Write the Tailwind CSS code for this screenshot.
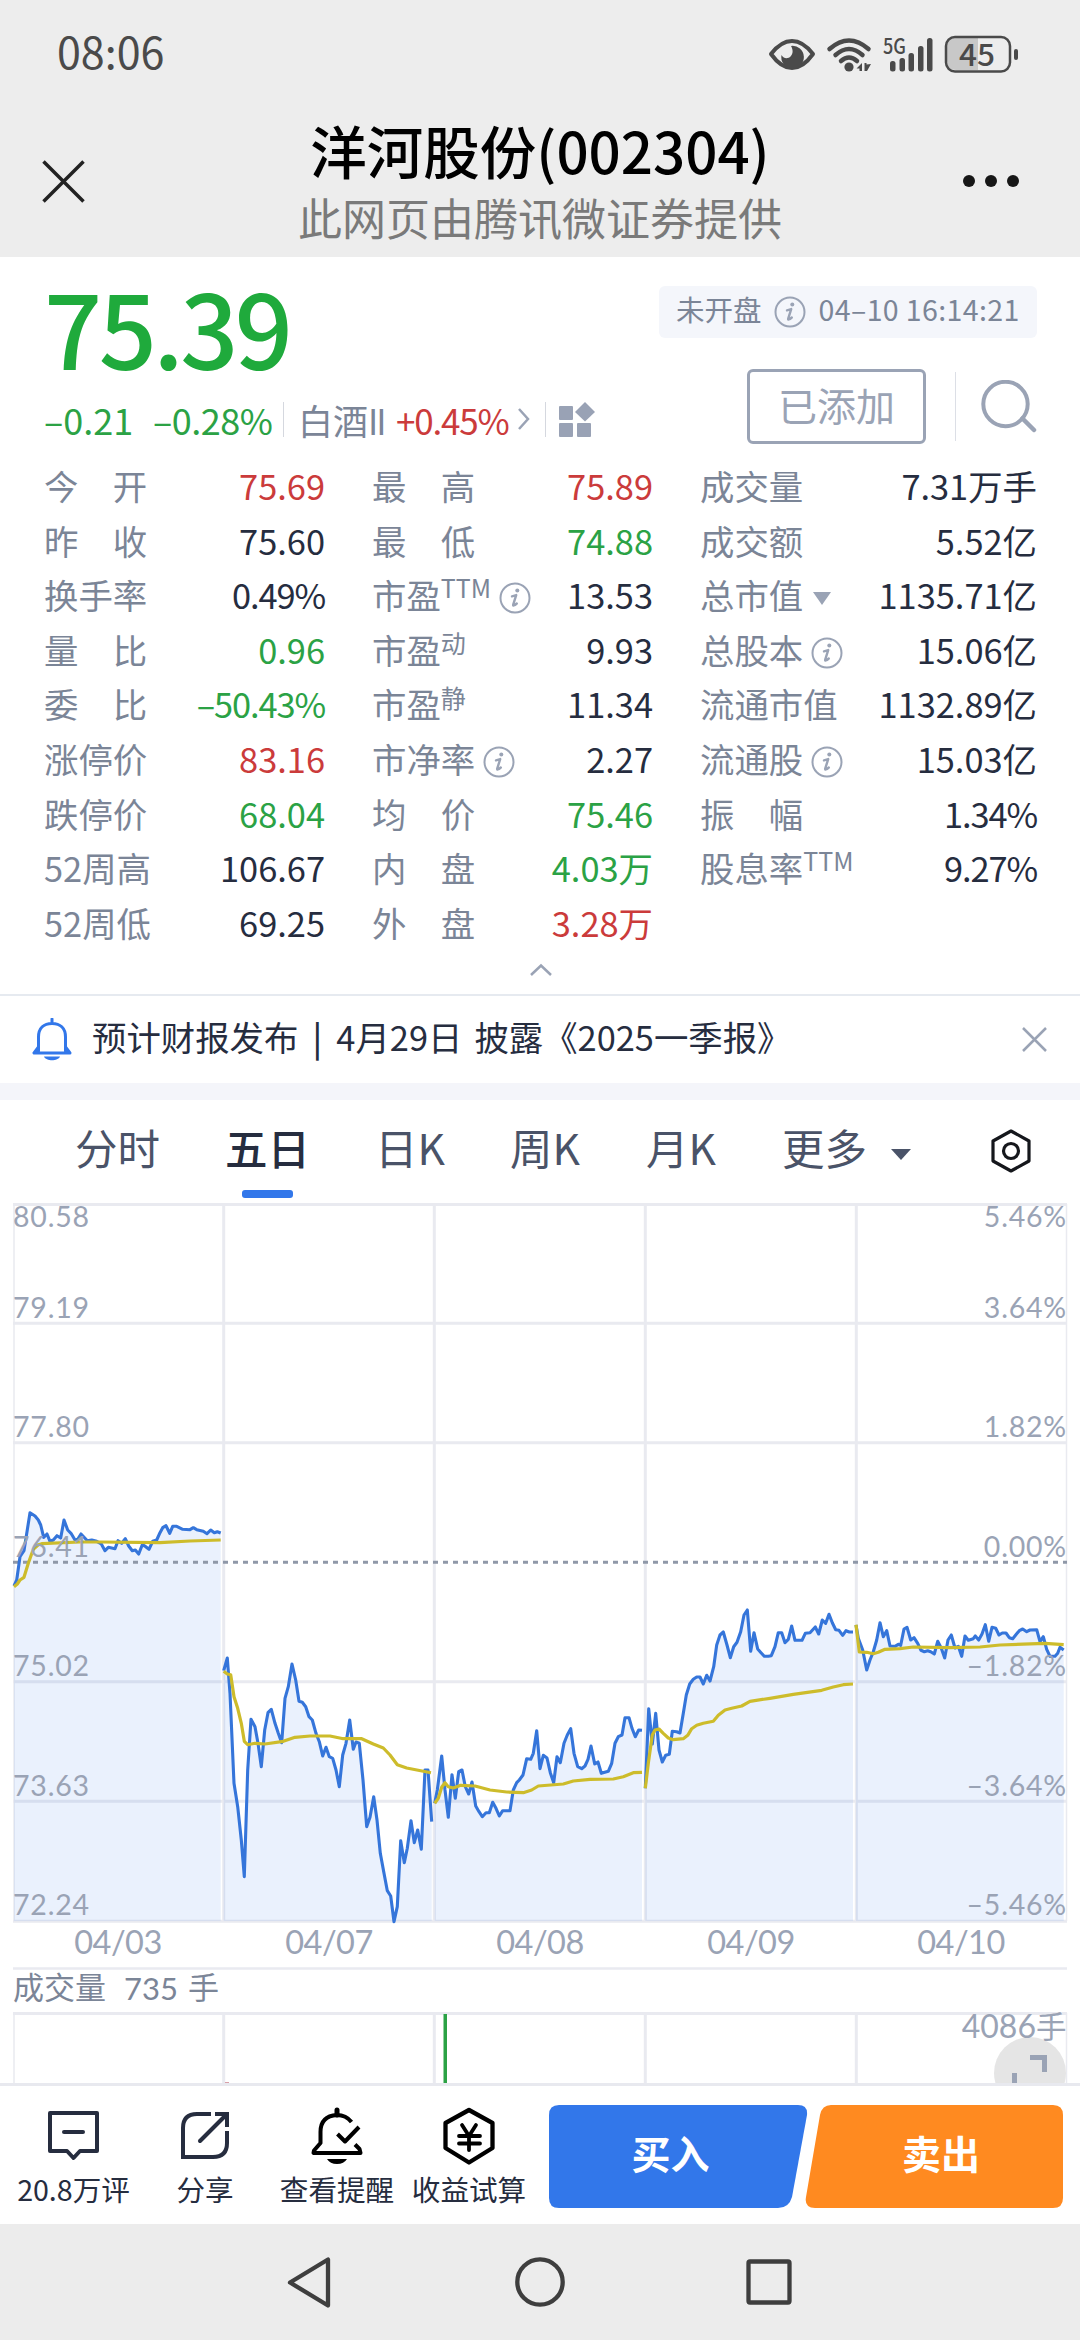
<!DOCTYPE html>
<html lang="zh-CN">

<head>
  <meta charset="UTF-8">
  <meta name="viewport" content="width=device-width, initial-scale=1.0">
  <title>洋河股份(002304)</title>
  <script src="https://cdn.jsdelivr.net/npm/@tailwindcss/browser@4"></script>
</head>

<body class="w-[1080px] h-[2340px] overflow-hidden bg-white font-['Noto_Sans_CJK_SC',sans-serif] text-[#262d3f]">
  <svg class="hidden">
    <symbol id="info" viewBox="0 0 32 32">
      <circle cx="16" cy="16" r="14.5" fill="none" stroke="#9aa3b5" stroke-width="2" />
      <circle cx="18.3" cy="8.6" r="2" fill="#9aa3b5" />
      <path d="M13 14.3l4.2-1.2-3 9.6c-.3 1.2.9 1.2 3.600-1.200" fill="none" stroke="#9aa3b5" stroke-width="2.400" stroke-linecap="round" stroke-linejoin="round" />
    </symbol>
  </svg>

  <div class="flex flex-col h-full">
    <!-- Status bar -->
    <header class="h-[257px] bg-[#ededed] shrink-0">
      <div class="flex items-center justify-between h-[107px] pl-[57px] pr-[61px]">
        <span class="text-[43px] leading-none text-[#4a4a4a] -mt-1.5">08:06</span>
        <svg class="w-[252px] h-[60px] overflow-visible" viewBox="767 23 252 60" fill="#4a4a4a">
          <path d="M771 53Q781 40 792 40T813 53Q803 67 792 67T771 53Z" fill="none" stroke="#4a4a4a" stroke-width="4" stroke-linejoin="round" />
          <path d="M791 45a11.300 11.300 0 1 1-9.500 9c2.500 4.500 7 3.500 9 1.500 3-3 2.500-7 .5-10.500z" />
          <g fill="none" stroke="#4a4a4a" stroke-width="4.500" stroke-linecap="round">
            <path d="M829.500 48Q849 31 868.500 48" />
            <path d="M835.500 54Q849 42 862.500 54" />
            <path d="M841 60Q849 53 857 60" />
          </g>
          <circle cx="849" cy="66" r="4.600" />
          <path d="M862 62v8h-2.500v-2.500h-3zM864.500 62h2v1.500l4.500-.5-4 7h-2.500z" />
          <text x="883" y="53" class="text-[21px] font-medium" textLength="23" lengthAdjust="spacingAndGlyphs">5G</text>
          <rect x="890" y="60" width="5.500" height="10.500" rx="2.500" />
          <rect x="899.500" y="57" width="5.500" height="13.500" rx="2.500" />
          <rect x="908.500" y="52" width="5.500" height="18.500" rx="2.500" />
          <rect x="918" y="45" width="5.500" height="25.500" rx="2.500" />
          <rect x="927" y="37" width="5.500" height="33.500" rx="2.500" />
          <path d="M978 37H956q-9 0-9 9v14q0 9 9 9h22z" fill="#c8c8c8" />
          <rect x="946" y="36" width="64" height="34.500" rx="9" fill="none" stroke="#4a4a4a" stroke-width="2.500" />
          <rect x="1014" y="48" width="4" height="11" rx="2" />
          <text x="959" y="64.500" class="text-[30px] font-medium" textLength="36" lengthAdjust="spacingAndGlyphs">45</text>
        </svg>
      </div>
      <!-- Title bar -->
      <div class="flex items-start justify-between px-[42px]">
        <svg class="w-[43px] h-[43px] mt-[53px]" viewBox="0 0 43 43">
          <path d="M1.500 1.500l40 40M41.500 1.500l-40 40" stroke="#222" stroke-width="3.500" />
        </svg>
        <div class="flex flex-col items-center w-[600px] pt-[2px]">
          <h1 class="text-[56.5px] font-medium leading-[80px] text-black">洋河股份(002304)</h1>
          <p class="text-[44px] leading-[54px] text-[#7a7a7a] mt-px">此网页由腾讯微证券提供</p>
        </div>
        <svg class="w-[43px] h-[14px] mt-[67px] overflow-visible" viewBox="0 0 43 14" fill="#171717">
          <circle cx="-26" cy="7" r="6" />
          <circle cx="-4" cy="7" r="6" />
          <circle cx="18" cy="7" r="6" />
        </svg>
      </div>
    </header>

    <!-- Quote -->
    <section class="h-[739px] shrink-0 border-b-2 border-[#e6eaf0] pl-[44px] pr-[43px]">
      <div class="flex justify-between h-[201px]">
        <div>
          <div class="text-[102px] leading-[112px] tracking-[-3.5px] text-[#1faa3c] font-medium mt-[13px]">75.39</div>
          <div class="flex items-center h-[44px] mt-[15px] text-[35px] leading-none">
            <span class="w-[109px] text-[#2ba245] text-[36px]">–0.21</span>
            <span class="w-[130px] text-[#2ba245] text-[36px] tracking-[-0.5px]">–0.28%</span>
            <span class="w-px h-[35px] bg-[#d5d8df]"></span>
            <span class="w-[112px] pl-[14px] text-[#7b8597] whitespace-nowrap">白酒<span class="tracking-[-2px]">II</span></span>
            <span class="w-[121px] text-[#cb3b3b] tracking-[-1.2px]">+0.45%</span>
            <svg class="w-[14px] h-[24px]" viewBox="0 0 14 24">
              <path d="M2 2l9 10-9 10" fill="none" stroke="#9aa3b5" stroke-width="2.500" />
            </svg>
            <span class="w-px h-[35px] bg-[#d5d8df] ml-[14px]"></span>
            <svg class="w-[36px] h-[36px] ml-[13px] mt-[2px]" viewBox="0 0 36 36" fill="#99a2b5">
              <rect x="0" y="4" width="14" height="14" rx="1" />
              <rect x="0" y="21" width="14" height="14" rx="1" />
              <rect x="18" y="21" width="14" height="14" rx="1" />
              <path d="M26 0l10 10-10 9.500L16 10z" />
            </svg>
          </div>
        </div>
        <div class="flex flex-col items-end pt-[29px]">
          <div class="flex items-center w-[378px] h-[52px] pl-[17px] rounded-md bg-[#f4f6fb] text-[28.5px] leading-none text-[#7b8597] whitespace-nowrap">
            <span class="-mt-1.5">未开盘</span>
            <svg class="w-[32px] h-[32px] ml-[12px] mr-[13px]"><use href="#info" /></svg>
            <span class="tracking-[0.4px] -mt-1.5">04–10 16:14:21</span>
          </div>
          <div class="flex items-center mt-[31px]">
            <div class="flex items-center justify-center w-[179px] h-[75px] pb-[4px] border-[3px] border-[#9aa3b5] rounded-md text-[39px] leading-none text-[#9aa3b5]">已添加</div>
            <span class="w-px h-[69px] bg-[#dcdfe6] ml-[29px] mr-[25px]"></span>
            <svg class="w-[56px] h-[54px]" viewBox="0 0 56 54" fill="none" stroke="#9aa3b5" stroke-linecap="round">
              <circle cx="24.500" cy="24" r="22.200" stroke-width="4" />
              <path d="M41.500 38.500L53 50" stroke-width="4.500" />
            </svg>
          </div>
        </div>
      </div>

      <div id="quotes" class="grid grid-cols-[281px_281px_1fr] gap-x-[47px] auto-rows-[54.6px] text-[34.4px] leading-none whitespace-nowrap"></div>

      <svg class="w-[24px] h-[14px] mx-auto mt-[14px]" viewBox="0 0 24 14">
        <path d="M2 12L12 2.500 22 12" fill="none" stroke="#9aa3b5" stroke-width="2.500" />
      </svg>
    </section>

    <!-- Notice -->
    <section class="flex items-center h-[87px] shrink-0 pl-[32px] pr-[33px]">
      <svg class="w-[40px] h-[44px]" viewBox="0 0 40 44">
        <path d="M20 1v4M6.500 33V19C6.500 10 12 5.500 20 5.500S33.500 10 33.500 19v14M6.500 29L2 35h36l-4.500-6" fill="none" stroke="#3277ea" stroke-width="3" stroke-linejoin="round" stroke-linecap="round" />
        <path d="M12 38.500h16c-2 5-14 5-16 0z" fill="#3277ea" />
      </svg>
      <p class="flex-1 ml-[20px] text-[34.4px] leading-none whitespace-pre -mt-1.5"><span>预计财报发布</span><span class="inline-block w-[38px] text-center font-medium">|</span><span>4月29日</span><span class="inline-block w-[12px]"></span><span>披露</span><span>《2025一季报》</span></p>
      <svg class="w-[25px] h-[25px]" viewBox="0 0 25 25">
        <path d="M1 1l23 23M24 1L1 24" stroke="#9aa3b5" stroke-width="2.500" />
      </svg>
    </section>
    <div class="h-[17px] shrink-0 bg-[#f4f5fa]"></div>

    <!-- Tabs -->
    <nav class="flex h-[100px] shrink-0 pl-[75px] pt-[25px] text-[42.5px] leading-[44px] text-[#4a5368]">
      <span class="w-[150px]">分时</span>
      <span class="w-[150px] flex flex-col text-[#262d3f] font-medium">五日<i class="block w-[51px] h-[8px] mt-[21px] ml-[17px] rounded-[3px] bg-[#3277ea]"></i></span>
      <span class="w-[135px]">日K</span>
      <span class="w-[136px]">周K</span>
      <span class="w-[136px]">月K</span>
      <span class="w-[109px]">更多</span>
      <svg class="w-[20px] h-[11px] mt-[24px]" viewBox="0 0 20 11"><path d="M0 0h20L10 11z" fill="#4a5368" /></svg>
      <svg class="w-[40px] h-[44px] ml-[80px] mt-[4px]" viewBox="0 0 40 44" fill="none" stroke="#15171c" stroke-width="3.200" stroke-linejoin="round">
        <path d="M20 2l18 10v20L20 42 2 32V12z" />
        <circle cx="20" cy="22" r="7.500" />
      </svg>
    </nav>

    <!-- 五日 chart -->
    <svg class="w-[1080px] h-[883px] shrink-0" viewBox="0 1200 1080 883">
      <g fill="none" stroke="#e9eaf0" stroke-width="3">
        <path d="M13 1204.500H1067M13 1323.300H1067M13 1442.800H1067M13 1681.800H1067M13 1801.300H1067M13 1921.300H1067" />
        <path d="M223.700 1204V1921M434.300 1204V1921M645.300 1204V1921M856.300 1204V1921" />
        <path d="M14 1204V1921M1066.500 1204V1921" stroke-width="1.500" />
      </g>
      <g id="areas" fill="#3277ea" fill-opacity=".1"></g>
      <path d="M13 1562.300H1067" stroke="#8f98a8" stroke-width="3" stroke-dasharray="5 5" />
      <g id="prices" fill="none" stroke="#3575da" stroke-width="3.100" stroke-linejoin="round"></g>
      <g id="averages" fill="none" stroke="#cdbc2b" stroke-width="3.200" stroke-linejoin="round"></g>
      <g class="font-[Lato,sans-serif] text-[28.5px] tracking-[0.8px]" fill="#9aa3b5">
        <g id="left"></g>
        <g id="right" text-anchor="end"></g>
      </g>
      <g class="font-[Lato,sans-serif] text-[32.5px] tracking-[-0.5px]" fill="#9aa3b5" text-anchor="middle">
        <text x="118" y="1954">04/03</text>
        <text x="329" y="1954">04/07</text>
        <text x="540" y="1954">04/08</text>
        <text x="751" y="1954">04/09</text>
        <text x="961" y="1954">04/10</text>
      </g>

      <!-- 成交量 -->
      <path d="M13 1968.500H1067" stroke="#e9eaf0" stroke-width="2.500" />
      <g class="text-[31px]" fill="#7b8597">
        <text x="13" y="1999">成交量</text>
        <text x="124" y="1999.500" class="font-[Lato,sans-serif]">735</text>
        <text x="188" y="1999">手</text>
      </g>
      <path d="M13 2013.500H1067M223.700 2013V2083M434.300 2013V2083M645.300 2013V2083M856.300 2013V2083" stroke="#e9eaf0" stroke-width="3" />
      <path d="M14 2013V2083M1066.500 2013V2083" stroke="#e9eaf0" stroke-width="1.500" />
      <rect x="225" y="2082" width="4" height="1" fill="#d9a0a8" />
      <rect x="443.500" y="2014" width="3.500" height="69" fill="#2ba245" />
      <circle cx="1030" cy="2073" r="36" fill="#e5e5e5" />
      <path d="M1030 2057.500H1044.500V2072M1014.500 2073V2083" fill="none" stroke="#9aa3b5" stroke-width="5" />
      <text x="1036" y="2038" class="font-[Lato,sans-serif] text-[32px]" fill="#9aa3b5" text-anchor="end">4086</text>
      <text x="1036" y="2038" class="text-[30.500px]" fill="#9aa3b5">手</text>
    </svg>

    <!-- Bottom bar -->
    <footer class="flex h-[141px] shrink-0 border-t-[3px] border-[#e8e9ef] pl-[8px] text-[28.6px] leading-[34px] whitespace-nowrap">
      <div class="flex flex-col items-center w-[131px] pt-[19px]">
        <svg class="w-[60px] h-[60px]" viewBox="0 0 60 60" fill="none" stroke="#262d3f" stroke-width="4" stroke-linejoin="round" stroke-linecap="round">
          <path d="M6 8h47v38H36l-6.500 7-6.500-7H6z" />
          <path d="M20 27h19" />
        </svg>
        <span class="mt-[7px]">20.8万评</span>
      </div>
      <div class="flex flex-col items-center w-[132px] pt-[19px]">
        <svg class="w-[60px] h-[60px]" viewBox="0 0 60 60" fill="none" stroke="#262d3f" stroke-width="4">
          <path d="M36 9H22Q8 9 8 23v29h30q14 0 14-14V26" />
          <path d="M40 9h12v13" />
          <path d="M51 10L25 36" stroke-linecap="round" />
        </svg>
        <span class="mt-[7px]">分享</span>
      </div>
      <div class="flex flex-col items-center w-[132px] pt-[19px]">
        <svg class="w-[60px] h-[60px]" viewBox="0 0 60 60" fill="none" stroke="#000" stroke-width="4" stroke-linejoin="round">
          <path d="M30 5v5" stroke-width="5" stroke-linecap="round" />
          <path d="M44.500 17Q39 10 30 10 13.500 11 13.500 27V38L7 45.500 6.500 48h47L52.500 44 48 39.500" />
          <path d="M30.500 29l7.500 7.500L52 22" />
          <path d="M20 54h20q-3 5-10 5t-10-5z" fill="#000" stroke="none" />
        </svg>
        <span class="mt-[7px]">查看提醒</span>
      </div>
      <div class="flex flex-col items-center w-[132px] pt-[19px]">
        <svg class="w-[60px] h-[60px]" viewBox="0 0 60 60" fill="none" stroke="#000" stroke-width="4.300" stroke-linejoin="round">
          <path d="M30 5l23.500 13v25L30 57.500 6.500 43V18z" />
          <path d="M23 20l7 11 7-11M20 31h21M20 38.500h21M30 31v14" stroke-width="3.800" stroke-linecap="round" />
        </svg>
        <span class="mt-[7px]">收益试算</span>
      </div>
      <svg class="w-[516px] h-[104px] ml-[14px] mt-[19px]" viewBox="549 2105 516 104">
        <path d="M559 2105H798Q808 2105 807 2115L792 2197Q789 2208 778 2208H559Q549 2208 549 2198V2115Q549 2105 559 2105z" fill="#3277ea" />
        <path d="M831 2105H1053Q1063 2105 1063 2115V2198Q1063 2208 1053 2208H815Q804 2208 806 2197L820 2115Q822 2105 831 2105z" fill="#ff8a20" />
        <g class="text-[39px] font-bold" fill="#fff" text-anchor="middle">
          <text x="670.500" y="2169">买入</text>
          <text x="941" y="2169">卖出</text>
        </g>
      </svg>
    </footer>

    <!-- System navigation -->
    <div class="flex items-center h-[116px] shrink-0 bg-[#ececec]">
      <svg class="w-[1080px] h-[60px]" viewBox="0 0 1080 60" fill="none" stroke="#3e3e3e" stroke-width="4.300" stroke-linejoin="round">
        <path d="M328 7.500v46L290 30.500z" />
        <circle cx="540" cy="30" r="22.700" />
        <rect x="748.500" y="9.500" width="41" height="41" rx="1.500" />
      </svg>
    </div>
  </div>

  <script>
    const GREEN = 'text-[#2ba245]';
    const RED = 'text-[#cb3b3b]';
    const info = '<svg class="w-[32px] h-[32px] ml-[8px] mt-[7px]"><use href="#info"></use></svg>';
    const caret = '<svg class="w-[18px] h-[13px] ml-[10px] mt-[8px]" viewBox="0 0 18 13"><path d="M0 0h18L9 13z" fill="#9aa3b5"></path></svg>';
    const small = (text) => `<span class="text-[25px] -mt-[13px]">${text}</span>`;

    const quotes = [
      ['今　开', '75.69', RED], ['最　高', '75.89', RED], ['成交量', '7.31万手'],
      ['昨　收', '75.60'], ['最　低', '74.88', GREEN], ['成交额', '5.52亿'],
      ['换手率', '0.49%'], ['市盈' + small('TTM') + info, '13.53'], ['总市值' + caret, '1135.71亿'],
      ['量　比', '0.96', GREEN], ['市盈' + small('动'), '9.93'], ['总股本' + info, '15.06亿'],
      ['委　比', '–50.43%', GREEN], ['市盈' + small('静'), '11.34'], ['流通市值', '1132.89亿'],
      ['涨停价', '83.16', RED], ['市净率' + info, '2.27'], ['流通股' + info, '15.03亿'],
      ['跌停价', '68.04', GREEN], ['均　价', '75.46', GREEN], ['振　幅', '1.34%'],
      ['52周高', '106.67'], ['内　盘', '4.03万', GREEN], ['股息率' + small('TTM'), '9.27%'],
      ['52周低', '69.25'], ['外　盘', '3.28万', RED],
    ];
    document.getElementById('quotes').innerHTML = quotes.map(([label, value, color]) => `
      <div class="flex items-center justify-between">
        <span class="flex items-center text-[#7b8597]">${label}</span>
        <span class="${color || ''} ${value.endsWith('%') ? 'tracking-[-1.1px]' : ''}">${value}</span>
      </div>`).join('');

    // 每日走勢: 原點 (x, y)，座標為 1/3 px
    const days = [
      {
        x: 0, y: 1480,
        price: '42,318 50,300 60,230 72,212 90,98 105,108 115,120 122,135 131,172 141,162 150,184 160,180 171,167 182,174 192,120 203,150 213,160 225,180 233,178 243,162 255,175 262,182 275,180 290,184 304,192 315,212 325,202 345,206 354,182 365,190 376,176 386,198 397,212 406,210 416,222 427,194 437,200 447,208 458,184 470,180 480,158 488,143 498,137 509,160 518,139 530,139 548,148 570,149 580,143 590,149 610,154 621,161 632,150 643,158 652,155 662,159',
        avg: '42,320 52,312 60,300 72,292 85,250 100,208 115,194 125,191 240,186 300,186 480,188 570,183 662,180',
      },
      {
        x: 0, y: 1480,
        price: '671,572 682,534 690,640 702,910 713,980 724,1080 733,1190 743,870 753,718 765,740 774,790 784,860 794,750 804,698 814,688 825,730 835,760 845,788 855,655 865,620 876,552 887,600 897,664 907,667 917,680 927,710 937,720 948,760 958,785 968,828 978,802 988,830 998,835 1008,870 1018,920 1028,825 1038,790 1049,720 1060,808 1068,786 1078,790 1089,900 1100,1040 1110,1012 1121,950 1131,1020 1141,1120 1152,1180 1162,1232 1172,1248 1182,1325 1192,1280 1202,1082 1213,1148 1222,1105 1233,1022 1243,1088 1253,1050 1264,1108 1275,870 1284,870 1295,1025',
        avg: '671,574 682,582 692,584 702,650 713,685 724,730 733,784 743,794 765,790 795,792 850,784 885,772 930,768 990,768 1030,776 1085,776 1120,792 1150,804 1170,825 1192,854 1220,864 1293,878',
      },
      {
        x: 420, y: 1480,
        price: '44,970 52,930 65,828 75,930 85,1012 96,884 106,955 116,875 126,870 136,920 146,942 156,906 167,978 177,995 187,1010 198,998 208,998 218,967 228,985 238,1008 248,992 270,992 280,930 290,908 298,900 309,885 320,836 332,838 340,820 350,752 360,866 370,826 381,834 391,878 401,908 411,830 421,848 432,790 442,765 452,746 462,820 473,860 485,866 495,858 504,838 513,798 524,852 534,846 544,880 565,874 575,850 585,790 595,770 606,765 615,713 627,713 636,745 646,770 656,750 666,751',
        avg: '44,970 55,955 65,922 75,908 85,920 100,924 122,916 165,918 210,930 260,936 310,938 335,930 355,918 430,912 460,903 510,898 580,897 610,890 640,878 666,877',
      },
      {
        x: 640, y: 1580,
        price: '16,625 26,386 37,492 47,400 57,510 67,546 77,526 88,523 97,454 110,455 120,459 130,400 139,345 149,312 160,298 170,291 180,291 190,312 200,286 210,303 221,260 230,195 240,165 250,156 261,195 271,233 281,200 291,187 302,155 312,105 322,90 332,214 342,158 353,207 363,218 373,229 385,229 394,227 405,200 415,158 425,158 435,188 445,178 455,138 465,181 486,181 496,160 510,158 526,141 536,162 547,120 557,130 567,103 577,128 587,149 597,151 608,166 618,152 628,156 639,156',
        avg: '16,625 25,550 37,465 45,450 57,447 70,460 85,474 100,479 130,476 143,466 155,446 170,436 190,430 220,424 235,406 255,390 275,385 305,378 330,364 390,355 460,343 545,331 580,321 610,314 639,312',
      },
      {
        x: 640, y: 1580,
        price: '648,135 655,175 668,210 680,270 690,240 700,215 710,180 720,128 730,170 740,152 750,198 765,199 775,193 782,196 792,147 801,142 812,180 822,173 833,190 843,211 853,215 863,212 872,215 883,222 893,184 904,205 914,234 924,180 934,165 945,204 955,199 965,229 975,168 985,181 1000,176 1006,168 1016,180 1026,162 1036,134 1046,184 1056,142 1067,145 1077,165 1087,159 1098,159 1108,173 1118,176 1130,161 1138,152 1148,147 1160,155 1170,150 1190,149 1200,185 1210,170 1220,208 1230,229 1245,229 1253,220 1260,202 1271,210',
        avg: '648,134 658,216 680,217 700,221 715,217 735,208 780,206 820,201 930,203 1020,201 1080,195 1215,190 1271,194',
      },
    ];
    const BASE = 1921;
    const toPoints = (day, text) => text.split(' ').map(pair => {
      const [x, y] = pair.split(',').map(Number);
      return [(day.x + x / 3).toFixed(1), (day.y + y / 3).toFixed(1)];
    });
    days.forEach(day => {
      const points = toPoints(day, day.price);
      const line = points.join(' ');
      const start = points[0][0];
      const end = points[points.length - 1][0];
      document.getElementById('areas').innerHTML += `<polygon points="${start},${BASE} ${line} ${end},${BASE}"></polygon>`;
      document.getElementById('prices').innerHTML += `<polyline points="${line}"></polyline>`;
      document.getElementById('averages').innerHTML += `<polyline points="${toPoints(day, day.avg).join(' ')}"></polyline>`;
    });

    const left = ['80.58', '79.19', '77.80', '76.41', '75.02', '73.63', '72.24'];
    const right = ['5.46%', '3.64%', '1.82%', '0.00%', '–1.82%', '–3.64%', '–5.46%'];
    const labelY = [1227, 1318, 1437, 1557, 1676, 1795.500, 1914.500];
    document.getElementById('left').innerHTML = left.map((t, i) => `<text x="13" y="${labelY[i]}">${t}</text>`).join('');
    document.getElementById('right').innerHTML = right.map((t, i) => `<text x="1067" y="${labelY[i]}">${t}</text>`).join('');
  </script>
</body>

</html>
